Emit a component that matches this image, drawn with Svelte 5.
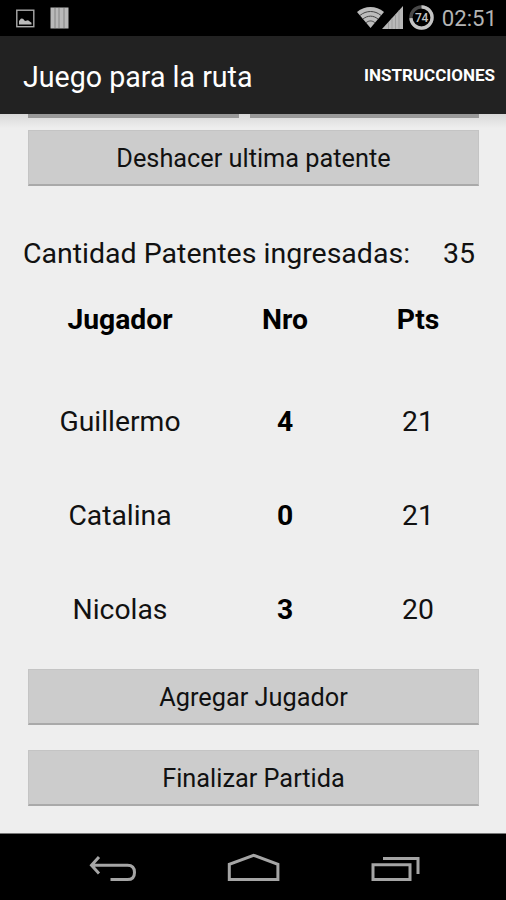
<script lang="ts">
  interface Player {
    name: string;
    nro: number;
    pts: number;
  }

  let players: Player[] = [
    { name: 'Guillermo', nro: 4, pts: 21 },
    { name: 'Catalina', nro: 0, pts: 21 },
    { name: 'Nicolas', nro: 3, pts: 20 }
  ];

  let total = 35;
  let battery = 74;
  let time = '02:51';
</script>

<div class="screen">
  <div class="status-bar">
    <div class="notifications">
      <svg width="19" height="19" viewBox="0 0 19 19">
        <rect x="0.8" y="1.2" width="17" height="16.5" fill="none" stroke="#aaa" stroke-width="1.4" />
        <path d="M3 15.5V12l2-2.5 2 .3 2 2.2 3-.8 3.5 2.6v1.7z" fill="#bbb" />
      </svg>
      <svg width="19" height="22" viewBox="0 0 19 22">
        <rect x="0.5" y="0.5" width="18" height="21" fill="#b9b9b9" />
        <path d="M5 1v20M9 1v20M14 1v20" stroke="#848484" stroke-width="1" />
      </svg>
    </div>
    <div class="system">
      <svg class="wifi" width="27" height="21" viewBox="0 0 27 21">
        <path d="M0 5C8-1.6 19-1.6 27 5L13.5 21z" fill="#bcbcbc" />
        <path d="M3 8.4c6.2-5.2 14.8-5.2 21 0M6 12c4.6-3.8 10.4-3.8 15 0M9.2 15.6c2.7-2.2 5.9-2.2 8.6 0" fill="none" stroke="#444" stroke-width="1" />
      </svg>
      <svg class="signal" width="21" height="23" viewBox="0 0 21 23">
        <path d="M0 23L21 0v23z" fill="#b8b8b8" />
        <path d="M6.5 16v7M10 12.5v10.5M13.5 8.5v14.5M17 4.5v18.5" stroke="#999" stroke-width="0.9" />
      </svg>
      <svg class="battery" width="25" height="25" viewBox="0 0 25 25">
        <circle cx="12.5" cy="12.5" r="10.6" fill="none" stroke="#484848" stroke-width="3.2" />
        <circle
          cx="12.5"
          cy="12.5"
          r="10.6"
          fill="none"
          stroke="#c4c4c4"
          stroke-width="3.2"
          pathLength="100"
          stroke-dasharray="{battery} 100"
          transform="rotate(-90 12.5 12.5)"
        />
        <text x="12.4" y="16.6" text-anchor="middle">{battery}</text>
      </svg>
      <span class="clock">{time}</span>
    </div>
  </div>

  <header class="action-bar">
    <h1>Juego para la ruta</h1>
    <button class="menu-action">INSTRUCCIONES</button>
  </header>

  <main>
    <!-- bottom edge of the two buttons scrolled under the action bar -->
    <div class="scrolled-row">
      <span></span>
      <span></span>
    </div>

    <button class="btn undo">Deshacer ultima patente</button>

    <div class="total">
      <span>Cantidad Patentes ingresadas:</span>
      <span>{total}</span>
    </div>

    <div class="row head">
      <span>Jugador</span>
      <span>Nro</span>
      <span>Pts</span>
    </div>
    {#each players as player}
      <div class="row">
        <span>{player.name}</span>
        <strong>{player.nro}</strong>
        <span>{player.pts}</span>
      </div>
    {/each}

    <button class="btn add">Agregar Jugador</button>
    <button class="btn finish">Finalizar Partida</button>
  </main>

  <nav class="nav-bar">
    <svg width="48" height="30" viewBox="0 -2 48 30">
      <path d="M10 2L2.5 10.2L10 18.4M3 10.2H38.5Q45.5 10.2 45.5 17.4Q45.5 24.6 38.5 24.6H21.500" />
    </svg>
    <svg width="54" height="30" viewBox="0 -2 54 30">
      <path d="M2.3 24.6V9.3L26.6 0.3L50.9 9.3V24.6z" />
    </svg>
    <svg width="50" height="30" viewBox="0 -2 50 30">
      <path d="M2 9.7H39V24.6H2zM12 3.5H47V19" />
    </svg>
  </nav>
</div>

<style>
  :global(body) {
    margin: 0;
    background: #000;
  }

  .screen {
    width: 506px;
    height: 900px;
    display: flex;
    flex-direction: column;
    overflow: hidden;
    font-family: Roboto, sans-serif;
    color: #111;
    background: #000;
  }

  button {
    font-family: inherit;
    border: none;
    padding: 0;
    color: inherit;
    cursor: pointer;
  }

  .status-bar {
    height: 36px;
    flex-shrink: 0;
    display: flex;
    justify-content: space-between;
    padding: 0 9px 0 16px;
    background: #000;
  }

  .notifications,
  .system {
    display: flex;
    align-items: center;
  }

  .notifications {
    gap: 15px;
  }

  .wifi {
    margin-bottom: 1px;
  }

  .signal {
    margin: 0 6px 2px -2px;
  }

  .battery {
    margin: 0 8px 2px 0;
  }

  .battery text {
    font-size: 12px;
    font-weight: 500;
    letter-spacing: -0.5px;
    fill: #c4c4c4;
  }

  .clock {
    font-size: 22.2px;
    line-height: 38px;
    color: #b4b4b4;
  }

  .action-bar {
    height: 78px;
    flex-shrink: 0;
    display: flex;
    align-items: center;
    justify-content: space-between;
    padding: 0 11px 0 23px;
    background: #222;
    color: #fff;
  }

  h1 {
    margin: 3px 0 0;
    font-size: 28.6px;
    font-weight: 400;
    line-height: 36px;
    white-space: nowrap;
  }

  .menu-action {
    background: none;
    font-size: 17px;
    font-weight: 700;
  }

  main {
    height: 719px;
    flex-shrink: 0;
    display: flex;
    flex-direction: column;
    background: linear-gradient(#d8d8d8, #eee 14px);
  }

  .scrolled-row {
    display: grid;
    grid-template-columns: 211px 229px;
    gap: 11px;
    margin-left: 28px;
    height: 4px;
  }

  .scrolled-row span {
    background: #999;
  }

  .btn {
    height: 56px;
    flex-shrink: 0;
    margin: 0 27px 0 28px;
    padding-top: 2px;
    font-size: 25.3px;
    background: #ccc;
    border: 1px solid #c4c4c4;
    border-bottom: 2px solid #a9a9a9;
    display: flex;
    align-items: center;
    justify-content: center;
  }

  .undo {
    margin-top: 12px;
  }

  .total {
    display: flex;
    justify-content: space-between;
    margin: 48px 31px 0 23px;
    font-size: 28.5px;
    line-height: 40px;
    white-space: nowrap;
  }

  .row {
    display: grid;
    grid-template-columns: 192px 138px 128px;
    margin-left: 24px;
    font-size: 28.3px;
    line-height: 94.3px;
    text-align: center;
  }

  .row strong {
    color: #000;
  }

  .head {
    font-weight: 700;
    color: #000;
    line-height: 92px;
    margin-bottom: 8.5px;
  }

  .add {
    margin-top: 12px;
  }

  .finish {
    margin-top: 25px;
  }

  .nav-bar {
    height: 67px;
    flex-shrink: 0;
    box-sizing: border-box;
    display: flex;
    gap: 90px;
    padding: 19px 0 0 89px;
    border-top: 1px solid #777;
    background: #000;
  }

  .nav-bar path {
    fill: none;
    stroke: #a5a5a5;
    stroke-width: 3;
  }
</style>
